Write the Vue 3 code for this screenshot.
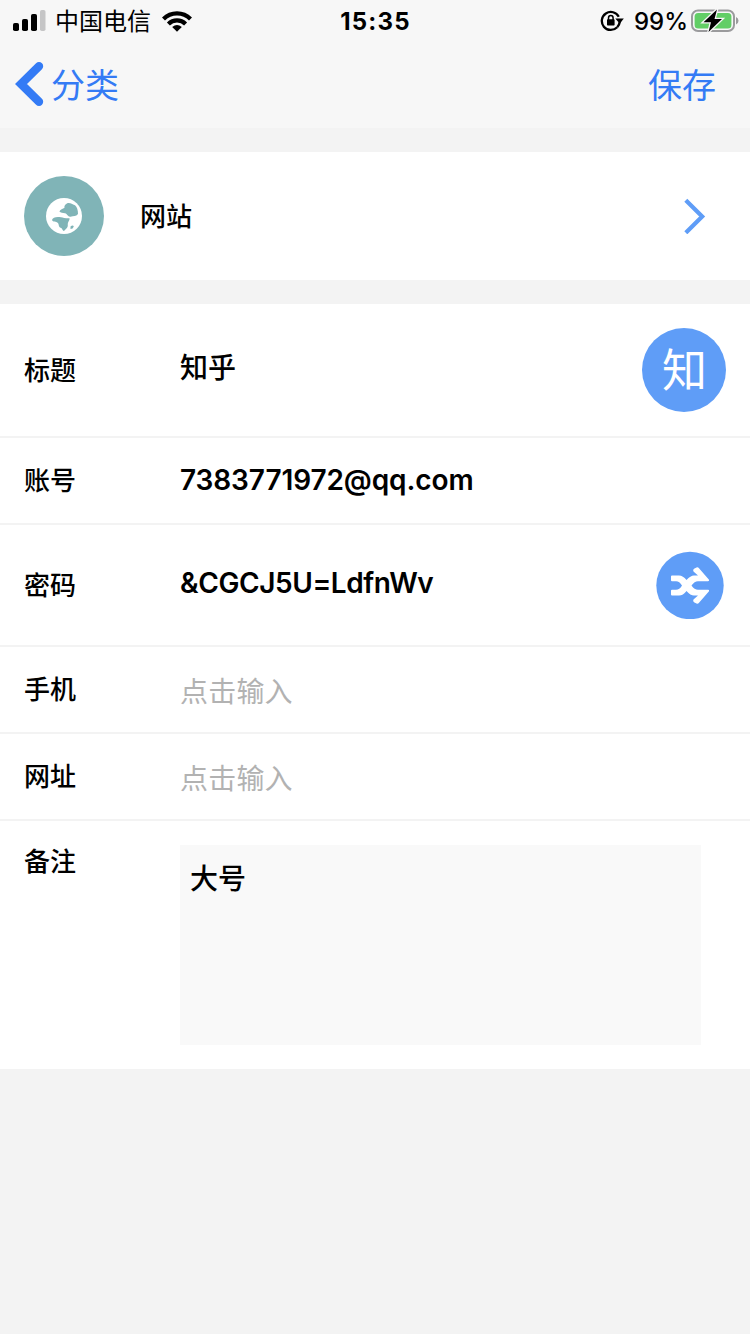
<script setup>
const account = '7383771972@qq.com'
const password = '&CGCJ5U=LdfnWv'
</script>

<template>
  <div class="screen">
    <header class="header">
      <div class="status">
        <div class="status-left">
          <svg class="signal" width="34" height="22" viewBox="0 0 34 22">
            <rect x="1" y="13" width="6" height="8" rx="1.8" />
            <rect x="10" y="9" width="6" height="12" rx="1.8" />
            <rect x="19" y="4" width="6" height="17" rx="1.8" />
            <rect x="28" y="0" width="5.5" height="21" rx="1.8" fill="#c5c5c6" />
          </svg>
          <span class="carrier">中国电信</span>
          <svg class="wifi" width="30" height="22" viewBox="0 0 30 22">
            <g fill="none" stroke="#000" stroke-width="4.2">
              <path d="M1.5 9 A19 19 0 0 1 28.5 9" />
              <path d="M6.4 14 A12.2 12.2 0 0 1 23.6 14" />
            </g>
            <path d="M15 21.8 L10.2 17 Q15 13.2 19.8 17 Z" />
          </svg>
        </div>
        <span class="time">15:35</span>
        <div class="status-right">
          <svg class="lock" width="24" height="22" viewBox="0 0 24 22">
            <path d="M18.800 6.800 A9 9 0 1 0 17.200 17.300" fill="none" stroke="#000" stroke-width="2.3" />
            <path d="M15.300 8.500 H23.800 L19.800 13.800 Z" />
            <path d="M19.700 12 A9 9 0 0 1 17.200 17.300" fill="none" stroke="#000" stroke-width="2.3" />
            <rect x="7" y="9.300" width="7.600" height="6.200" rx="0.8" />
            <path d="M8.500 10 V7.900 A2.3 2.3 0 0 1 13.100 7.900 V10" fill="none" stroke="#000" stroke-width="1.5" />
          </svg>
          <span class="percent">99%</span>
          <svg class="battery" width="48" height="26" viewBox="0 0 48 26">
            <rect x="1" y="2.5" width="42" height="20.5" rx="6" fill="none" stroke="#9b9b9d" stroke-width="2" />
            <rect x="3.6" y="5" width="36.8" height="15.5" rx="3.5" fill="#62ce66" />
            <path d="M45 9 Q47.5 10 47.5 12.8 Q47.5 15.6 45 16.6 Z" fill="#9b9b9d" />
            <path d="M26 1.5 L12.5 14.3 H20 L17.5 24 L31 11 H23.5 Z" stroke="#f7f7f7" stroke-width="2.6" paint-order="stroke" />
          </svg>
        </div>
      </div>
      <nav class="nav">
        <button class="back">
          <svg width="30" height="46" viewBox="0 0 30 46">
            <path d="M24 5.200 L6 23 L24 40.800" fill="none" stroke="#347bf5" stroke-width="8.400" stroke-linecap="round" stroke-linejoin="miter" />
          </svg>
          <span class="nav-text">分类</span>
        </button>
        <button class="nav-text">保存</button>
      </nav>
    </header>

    <section class="category">
      <div class="globe">
        <svg width="36" height="36" viewBox="0 0 36 36">
          <circle cx="18" cy="18" r="18" fill="#fff" />
          <path d="M22 5 C25 4.700 26 6.500 29 7.200 C31 9 32 12 32 16 C30 18.500 27.500 18 24.500 18.700 C22 19.200 21.500 16 19 15.300 C17 14.600 14.500 15 13.400 13.500 C14 11.500 17 10.500 18.500 9.700 C18 7.500 20 5.500 22 5 Z" fill="#80b4b7" />
          <path d="M6 22 C6.500 19 11 18.500 15 19.200 C17 19.700 20 20.500 23.500 20.300 C24 22.500 21.500 24 21.800 27 C22 30 20 30.500 18 33 C16 32.500 16.500 30 14.500 29.800 C12.500 29 13 26.500 12 25 C10 23 7 24.500 6 22 Z" fill="#80b4b7" />
          <path d="M24.500 28.500 Q27 26.500 27.800 28.500 Q27 31 24.500 31 Z" fill="#80b4b7" />
        </svg>
      </div>
      <span class="category-name">网站</span>
      <svg class="chevron" width="22" height="36" viewBox="0 0 22 36">
        <path d="M1.800 2.200 L18.200 18.500 L1.800 34.800" fill="none" stroke="#5f9df7" stroke-width="4.200" />
      </svg>
    </section>

    <section class="form">
      <div class="row title-row">
        <span class="label">标题</span>
        <span class="value">知乎</span>
        <div class="avatar">知</div>
      </div>
      <div class="row">
        <span class="label">账号</span>
        <span class="value account">{{ account }}</span>
      </div>
      <div class="row password-row">
        <span class="label">密码</span>
        <span class="value password">{{ password }}</span>
        <button class="shuffle">
          <svg width="68" height="68" viewBox="0 0 68 68">
            <circle cx="34" cy="34.500" r="33.700" fill="#5f9df7" />
            <path
              d="M16 24.500 H23 Q27 24.500 30.500 29 Q34.500 24.500 38 24.500 H42 L37.500 20.500 Q36.500 19 38 17.800 L40.500 16.500 Q42 16 43 17.300 L53 28.800 Q53.500 30.200 52 30.200 H42 Q38.500 30.200 35.500 34.500 Q38.500 38.800 42 38.800 H52 Q53.500 38.800 53 40.200 L43 51.700 Q42 53 40.500 52.500 L38 51.200 Q36.500 50 37.500 48.500 L42 44.500 H38 Q34.500 44.500 30.500 40 Q27 44.500 23 44.500 H16 Q15 44.500 15 43.500 V39.800 Q15 38.800 16 38.800 H20 Q23.500 38.800 26 34.500 Q23.500 30.200 20 30.200 H16 Q15 30.200 15 29.200 V25.500 Q15 24.500 16 24.500 Z"
              fill="#fff"
            />
          </svg>
        </button>
      </div>
      <div class="row">
        <span class="label">手机</span>
        <span class="value placeholder">点击输入</span>
      </div>
      <div class="row">
        <span class="label">网址</span>
        <span class="value placeholder">点击输入</span>
      </div>
      <div class="row note-row">
        <span class="label">备注</span>
        <div class="note">大号</div>
      </div>
    </section>
  </div>
</template>

<style>
body {
  background: #f3f3f3;
}
</style>

<style scoped>
.screen {
  width: 750px;
  min-height: 1334px;
  background: #f3f3f3;
  color: #000;
  font-family: Inter, "Noto Sans CJK SC", sans-serif;
}
svg {
  display: block;
  flex: none;
}
button {
  border: 0;
  padding: 0;
  background: none;
  font: inherit;
  color: inherit;
}
.header {
  height: 128px;
  background: #f7f7f7;
}
.status {
  height: 40px;
  display: grid;
  grid-template-columns: 1fr auto 1fr;
  align-items: center;
  padding: 0 11px 0 12px;
  line-height: 38px;
}
.status-left,
.status-right {
  display: flex;
  align-items: center;
}
.status-right {
  justify-content: flex-end;
}
.carrier {
  margin: 0 11px 0 9px;
  padding-top: 3px;
  font-size: 24px;
}
.time {
  padding-top: 2px;
  font-size: 24px;
  font-weight: 700;
  letter-spacing: 1.2px;
}
.percent {
  margin: 0 3px 0 10px;
  padding-top: 2px;
  font-size: 24px;
  font-weight: 500;
}
.nav {
  height: 88px;
  display: flex;
  align-items: center;
  justify-content: space-between;
  padding: 0 34px 0 15px;
  color: #347bf5;
  font-size: 34px;
}
.back {
  display: flex;
  align-items: center;
  gap: 6px;
}
.nav-text {
  padding-bottom: 1px;
}
.category {
  height: 128px;
  margin: 24px 0;
  padding: 0 44px 0 24px;
  box-sizing: border-box;
  display: flex;
  align-items: center;
  background: #fff;
}
.globe {
  width: 80px;
  height: 80px;
  border-radius: 50%;
  display: flex;
  align-items: center;
  justify-content: center;
  background: #80b4b7;
}
.category-name {
  flex: 1;
  margin-left: 36px;
  padding-bottom: 4px;
  font-size: 26px;
  font-weight: 500;
}
.form {
  background: #fff;
}
.row {
  height: 87px;
  padding: 0 24px;
  box-sizing: border-box;
  border-bottom: 2px solid #f3f3f3;
  display: flex;
  align-items: center;
}
.label {
  width: 156px;
  padding-bottom: 4px;
  font-size: 26px;
  font-weight: 500;
}
.value {
  flex: 1;
  font-size: 28px;
  font-weight: 500;
  white-space: nowrap;
}
.placeholder {
  color: #b2b2b2;
  font-weight: 400;
  letter-spacing: 0.2px;
}
.account {
  padding-bottom: 2px;
  font-weight: 600;
  letter-spacing: -0.1px;
}
.password {
  font-weight: 600;
  letter-spacing: -0.4px;
}
.title-row {
  height: 134px;
}
.title-row .value {
  padding-bottom: 8px;
}
.password-row .value {
  padding-bottom: 5px;
}
.avatar {
  width: 84px;
  height: 84px;
  padding: 1px 0 0 1px;
  box-sizing: border-box;
  border-radius: 50%;
  background: #5f9df7;
  color: #fff;
  font-size: 45px;
  line-height: 84px;
  text-align: center;
}
.password-row {
  height: 122px;
  padding-right: 26px;
}
.note-row {
  height: 248px;
  padding: 24px 49px 24px 24px;
  border: 0;
  align-items: flex-start;
}
.note-row .label {
  padding-top: 1px;
  line-height: 32px;
}
.note {
  flex: 1;
  height: 200px;
  padding: 14px 10px;
  box-sizing: border-box;
  background: #f9f9f9;
  font-size: 28px;
  font-weight: 500;
  line-height: 40px;
}
</style>
